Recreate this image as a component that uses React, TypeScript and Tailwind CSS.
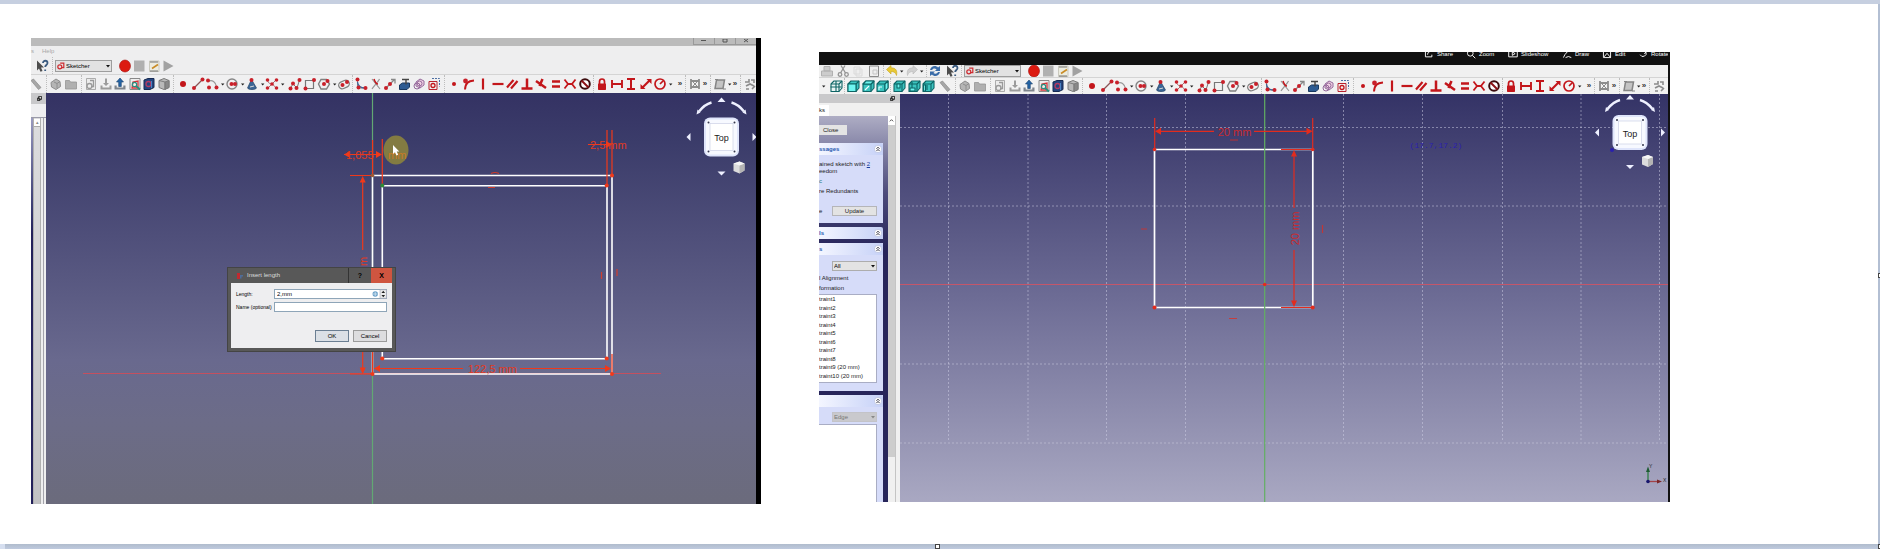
import type { ReactNode } from "react";

const RED = "#c3161b";
const DIM = "#f0391a";

const Dots = ({ at, r = 2 }: { at: number[][]; r?: number }) => (
  <>
    {at.map(([x, y]) => (
      <circle key={`${x}-${y}`} cx={x} cy={y} r={r} fill="#c8202a" />
    ))}
  </>
);

const viewCube = (face: string | null, mark?: ReactNode) => (
  <g stroke="#0d6465" strokeWidth="1.1" strokeLinejoin="round">
    <path d="M2 5l3-3h8v7l-3 3.500H2z" fill={face ? "#3cc4c0" : "#e8f4f4"} />
    <path d="M2 5h8l3-3M10 5v7.500" fill="none" />
    {face && <path d={face} fill="#6ff5f0" />}
    {mark}
  </g>
);

const glyphs: Record<string, ReactNode> = {
  Measure: <path d="M2 3.500l2.500-1.500 7.500 8.500-2.500 2z" fill="#a6a6a6" stroke="#8b8b8b" strokeWidth=".7" />,
  "Create part": (
    <g fill="#b5b5b5" stroke="#8e8e8e">
      <path d="M2 5.500l5-3.500 4 2.500.500 5L7 12.500 2.500 10z" />
      <path d="M5 5l3 1.500V11M8 6.500l3-2" fill="none" />
    </g>
  ),
  "Create group": <path d="M1.500 3.500h4l1 1.500h6v7h-11z" fill="#b0b0b0" stroke="#969696" strokeWidth=".8" />,
  "New sketch": (
    <g fill="none" stroke="#9a9a9a">
      <path d="M2.500 1.500h9v11h-9z" fill="#ececec" strokeWidth=".8" />
      <circle cx="5.500" cy="9" r="2.500" strokeWidth="1.300" />
      <path d="M6 3.500h3.500v6H7" strokeWidth="1.300" />
    </g>
  ),
  "Edit sketch": (
    <g fill="#9c9c9c">
      <path d="M6 1.500h2V6h2L7 9 4 6h2z" />
      <path d="M1.500 8.500h2v2h7v-2h2v4h-11z" />
    </g>
  ),
  "Leave sketch": (
    <g>
      <path d="M7 1l3.500 4H8.300v4.500H5.700V5H3.500z" fill="#2564a5" stroke="#17406d" strokeWidth=".6" />
      <path d="M1.500 8.500h2.200v2h6.600v-2h2.200v4h-11z" fill="#7f858d" />
    </g>
  ),
  "View sketch": (
    <g fill="none">
      <path d="M2 1.500h10v11H2z" fill="#eee" stroke="#888" />
      <path d="M4 11l1-6 5-1v7z" stroke="#d63338" strokeWidth="1.300" />
      <circle cx="6.500" cy="7.500" r="2.200" stroke="#27907f" strokeWidth="1.200" />
      <path d="M8 9l4 3.500" stroke="#27907f" strokeWidth="1.800" />
    </g>
  ),
  "View section": (
    <g strokeLinejoin="round">
      <path d="M2 3l4-1.500h6v9L8 12.500H2z" fill="#24457e" stroke="#172a52" />
      <circle cx="6.500" cy="7" r="2.500" fill="none" stroke="#b33a63" strokeWidth="1.300" />
      <path d="M9.500 4v7" stroke="#4c83c4" />
    </g>
  ),
  "Map sketch": (
    <g stroke="#7d7d7d" strokeLinejoin="round">
      <path d="M2 3.500l5-2 5 2v7l-5 2-5-2z" fill="#b9b9b9" />
      <path d="M8 5l4-1.500v7L8 12.500z" fill="#888" />
      <path d="M2 3.500L8 5v7.500" fill="none" />
    </g>
  ),
  Point: <circle cx="7" cy="7" r="3" fill={RED} />,
  Line: (
    <g>
      <path d="M3 11l8-8" stroke="#8b5557" strokeWidth="1.300" />
      <Dots at={[[3, 11], [11.500, 2.500]]} />
    </g>
  ),
  Arc: (
    <g>
      <path d="M3 4.500C7 2 11 5 11.500 10" stroke="#999" strokeWidth="1.300" fill="none" />
      <Dots at={[[3, 3.500], [4, 10.500], [11.500, 10.500]]} />
    </g>
  ),
  Circle: (
    <g>
      <circle cx="7" cy="7" r="5" stroke="#858585" strokeWidth="1.400" fill="none" />
      <Dots at={[[6.500, 7], [10, 7]]} />
    </g>
  ),
  Conic: (
    <g>
      <path d="M6.500 2.500L2.500 11c1 2 8 2 9 0z" fill="#3b6696" stroke="#234063" strokeWidth=".7" />
      <Dots at={[[6.500, 3]]} />
      <path d="M5 10l4-1" stroke="#d9d9d9" />
    </g>
  ),
  Spline: (
    <g>
      <path d="M2.500 3c1 5 4 3 5 4s3 4 4 4M3 11L11 3" stroke="#a76d70" fill="none" />
      <Dots at={[[2.500, 3], [11.500, 3], [2.500, 11], [11.500, 11], [7, 7]]} r={1.8} />
    </g>
  ),
  Polyline: (
    <g>
      <path d="M2 11.500L5 7l4 4 2.500-8" stroke="#777" fill="none" />
      <Dots at={[[2.500, 11.500], [5, 6.500], [8.500, 11], [11.500, 3]]} />
    </g>
  ),
  Rectangle: (
    <g>
      <path d="M2.500 3.500h8v8h-8z" stroke="#777" strokeWidth="1.200" fill="none" />
      <Dots at={[[2.500, 11.500], [11, 3]]} />
    </g>
  ),
  Polygon: (
    <g>
      <path d="M4 2.500h5.500l3 4.500-3 5H4L1.500 7z" stroke="#808080" strokeWidth="1.400" fill="none" />
      <Dots at={[[7, 7], [10.500, 4]]} />
    </g>
  ),
  Slot: (
    <g>
      <rect x="1.500" y="4" width="11" height="7" rx="3.500" transform="rotate(-25 7 7.500)" stroke="#808080" strokeWidth="1.300" fill="none" />
      <Dots at={[[5.500, 8], [10, 5]]} />
    </g>
  ),
  Fillet: (
    <g>
      <path d="M3.500 2v9h8" stroke="#888" fill="none" />
      <path d="M3.500 5C4 9 6 11 11 11" stroke="#3d659a" strokeWidth="1.300" fill="none" />
      <Dots at={[[3.500, 2.500], [4.500, 10.500], [11.500, 11]]} />
    </g>
  ),
  Trim: (
    <g fill="none">
      <path d="M3 2l8 10M10.500 2C9 5 5 9 3 12" stroke="#969696" strokeWidth="1.200" />
      <path d="M5 2c1 3 2 5 4 5" stroke={RED} strokeWidth="1.500" />
    </g>
  ),
  Extend: (
    <g>
      <path d="M3 11l8-8M8 2.500h4v4" stroke="#888" strokeWidth="1.300" fill="none" />
      <Dots at={[[3, 11], [7, 7]]} />
    </g>
  ),
  "External geometry": (
    <g>
      <path d="M1.500 8l3-2h7v4l-2.500 2.500H1.500z" fill="#2d5b92" stroke="#18385f" />
      <path d="M4 2.500h7M8 2.500v5" stroke="#444" strokeWidth="1.400" />
    </g>
  ),
  "Carbon copy": (
    <g fill="#f1d2e4" stroke="#94699b">
      <path d="M4 5l4-3 4 2v4l-4 3-4-2z" />
      <circle cx="5" cy="9" r="3" fill="none" />
      <circle cx="7.500" cy="6.500" r="2.500" fill="none" />
    </g>
  ),
  "Construction mode": (
    <g fill="none">
      <path d="M5 1.500h7.500v8" stroke="#4d6fa3" strokeDasharray="2 1" />
      <path d="M2 4.500h8v8H2z" stroke="#b8232f" />
      <circle cx="6" cy="8.500" r="2" stroke={RED} strokeWidth="1.300" />
    </g>
  ),
  Coincident: <circle cx="7" cy="7" r="2" fill={RED} />,
  "Point on object": (
    <g>
      <path d="M3 12.500C3.500 6 6 4 12 3.500" stroke={RED} strokeWidth="2" fill="none" />
      <Dots at={[[3.500, 4]]} r={2.4} />
    </g>
  ),
  Vertical: <path d="M7 1.500v11" stroke={RED} strokeWidth="2.200" />,
  Horizontal: <path d="M1.500 7h11" stroke={RED} strokeWidth="2.200" />,
  Parallel: <path d="M2 10.500L8.500 3M6 11.500L12.500 4" stroke={RED} strokeWidth="2.200" />,
  Perpendicular: <path d="M7 1.500v9M1.500 11.500h11" stroke={RED} strokeWidth="2.500" />,
  Tangent: <path d="M2 4l10 7M8.500 2L5.500 9" stroke={RED} strokeWidth="2.500" />,
  Equal: <path d="M3 4.500h8M3 9.500h8" stroke={RED} strokeWidth="2.400" />,
  Symmetric: <path d="M1.500 2.500L5 7l-3.500 4.500M12.500 2.500L9 7l3.500 4.500M5 7h4" stroke={RED} strokeWidth="1.800" fill="none" />,
  Block: (
    <g fill="none" stroke="#3c0c0e" strokeWidth="2">
      <circle cx="7" cy="7" r="4.800" fill="#fff" />
      <path d="M3.500 3.500l7 7" stroke="#8c1216" />
    </g>
  ),
  Lock: (
    <g>
      <path d="M4.500 7V4.500a2.500 2.500 0 015 0V7" stroke={RED} strokeWidth="1.700" fill="none" />
      <rect x="3" y="6.500" width="8" height="6.500" rx=".7" fill={RED} />
    </g>
  ),
  "Horizontal distance": <path d="M2 3v8M12 3v8M2 7h10" stroke={RED} strokeWidth="1.900" />,
  "Vertical distance": <path d="M3 2h8M3 12h8M7 2v10" stroke={RED} strokeWidth="2" />,
  Distance: (
    <g>
      <path d="M3.500 10.500l7-7" stroke={RED} strokeWidth="2.200" />
      <path d="M7.500 2h5v5zM6.500 12h-5V7z" fill={RED} />
    </g>
  ),
  Radius: (
    <g fill="none" stroke={RED} strokeWidth="1.700">
      <circle cx="7" cy="7" r="5" />
      <path d="M7 7l3-3" />
    </g>
  ),
  "Select constraints": (
    <g fill="none" stroke="#8d8d8d" strokeWidth="1.800">
      <path d="M3 2v10M11 2v10M3 4h8M3 10h8" />
      <path d="M4 4l6 6M10 4l-6 6" strokeWidth="1" />
    </g>
  ),
  "Show degrees of freedom": (
    <g fill="#c4c4c4" stroke="#858585" strokeWidth="1.500">
      <path d="M3.500 3h8l-1.500 8.500H2z" />
      <path d="M2 2.500h3M10 12h3" strokeWidth="1" />
    </g>
  ),
  "Virtual space": (
    <g fill="none" stroke="#8c8c8c" strokeWidth="1.600">
      <path d="M2 5h4V2M8 3h3v3M3 9l4-2 4 2M3 12h3M9 12l3-3" />
    </g>
  ),
  Isometric: viewCube(null, <path d="M1.500 8h11M7 2v11" fill="none" />),
  Front: viewCube("M2 5h8v7.500H2z"),
  TopView: viewCube("M2 5l3-3h8l-3 3z", <path d="M4 11l4-4" fill="none" stroke="#f4ffff" />),
  Right: viewCube("M10 5l3-3v7l-3 3.500z", <path d="M4 11V8h3" fill="none" stroke="#e5ffff" />),
  Rear: viewCube("M5 5h3v4H5z"),
  Bottom: viewCube("M3 9h5v3H3z", <path d="M5 3v6" fill="none" />),
  Left: viewCube("M2.500 6h2v6h-2z", <path d="M6 6v5" fill="none" />),
  "What is this": (
    <g>
      <path d="M2 1.500l7 7H6l1.500 3.500-2 .7L4 9.500l-2 2z" fill="#4d4d4d" />
      <path d="M8 4c0-3 4.500-3 4.500 0 0 2-2.300 2-2.300 4M10.200 10.500v1.500" stroke="#3c5c80" strokeWidth="1.800" fill="none" />
    </g>
  ),
  Record: <ellipse cx="7" cy="7" rx="5.500" ry="6" fill="#dc1a10" stroke="#a50c0a" strokeWidth=".6" />,
  Stop: <path d="M2 1.500h10.500v11H2z" fill="#b0b0b0" />,
  Macros: (
    <g fill="none">
      <path d="M2.500 2h9.500v10.500H2.500z" fill="#ececdf" stroke="#c0bfb4" strokeWidth=".8" />
      <path d="M3 3h8M3 12h8" stroke="#777" />
      <path d="M5 9.500l6-4" stroke="#c98c26" strokeWidth="1.600" />
    </g>
  ),
  Play: <path d="M2.500 1.500L12.500 7l-10 5.500z" fill="#a2a2a2" />,
  Print: <path d="M1.500 7h11v5h-11zM4 2.500h6V7H4z" fill="#ccc" stroke="#b1b1b1" />,
  Cut: (
    <g fill="none" stroke="#949494" strokeWidth="1.300">
      <path d="M5 1.500L9.500 9M9 1.500L4.500 9" />
      <circle cx="4" cy="10.500" r="1.800" />
      <circle cx="10.500" cy="10.500" r="1.800" />
    </g>
  ),
  Copy: <path d="M3 3h6v7H3zM5 5h6v7H5z" fill="#eee" stroke="#dadada" />,
  Paste: (
    <g fill="#eee" stroke="#8a8a8a">
      <path d="M2.500 2h9v10.500h-9z" />
      <path d="M6 6h4v4H6z" stroke="#c5c5c5" />
    </g>
  ),
  Undo: <path d="M1.500 5.500L6 1.500v2.300c5 0 6.500 3 5.500 7.700-1-3-2.500-4-5.500-4v2.500z" fill="#e9c935" stroke="#c8a41c" strokeWidth=".6" />,
  Redo: <path d="M12.500 5.500L8 1.500v2.300c-5 0-6.500 3-5.500 7.700 1-3 2.500-4 5.500-4v2.500z" fill="#d0d0d0" stroke="#bbb" strokeWidth=".6" />,
  Refresh: (
    <g fill="#3a6ca8">
      <path d="M2 6c1-4.500 6-5 8-2.500L12 2v5H7l1.600-1.700C7 4 5 4 4 6z" />
      <path d="M12 8c-1 4.500-6 5-8 2.500L2 12V7.500h5L5.400 9c1.600 1 3.600 1 4.600-1z" />
    </g>
  ),
};

function Tool({ name }: { name: string }) {
  return (
    <button type="button" aria-label={name} className="block size-[14px] shrink-0">
      <svg viewBox="0 0 14 14" className="size-full" aria-hidden="true">{glyphs[name]}</svg>
    </button>
  );
}

function Caret() {
  return (
    <svg viewBox="0 0 5 14" className="h-[14px] w-[5px] shrink-0" aria-hidden="true">
      <path d="M1 6.500h3.400L2.700 8.500z" fill="#222" />
    </svg>
  );
}

function More() {
  return (
    <button type="button" aria-label="More tools" className="w-[6px] shrink-0 text-center font-bold text-[8px] leading-[14px] text-[#333]">
      »
    </button>
  );
}

/* A dash in the list stands for the drop-down arrow of the tool before it. */
function Group({ items, className }: { items: string[]; className: string }) {
  return (
    <div className={`flex shrink-0 items-center justify-between ${className}`}>
      {items.map((n, i) => (n === "-" ? <Caret key={i} /> : <Tool key={i} name={n} />))}
    </div>
  );
}

const Sep = ({ className = "w-[6px]" }: { className?: string }) => (
  <div className={`flex shrink-0 justify-center self-stretch ${className}`}>
    <div className="border-l border-dotted border-[#bdbdbd]" />
  </div>
);

function SketchTools() {
  return (
    <>
      <Tool name="Measure" />
      <Sep />
      <Group className="w-[29px]" items={["Create part", "Create group"]} />
      <Sep />
      <Group className="w-[87px]" items={["New sketch", "Edit sketch", "Leave sketch", "View sketch", "View section", "Map sketch"]} />
      <Sep className="w-[5px]" />
      <Group className="w-[109px]" items={["Point", "Line", "Arc", "-", "Circle", "-", "Conic", "-", "Spline", "-"]} />
      <Group className="ml-[3px] w-[63px]" items={["Polyline", "Rectangle", "Polygon", "-", "Slot"]} />
      <Sep className="w-[3px]" />
      <Group className="w-[87px]" items={["Fillet", "Trim", "Extend", "External geometry", "Carbon copy", "Construction mode"]} />
      <Sep />
      <Group
        className="w-[145px]"
        items={["Coincident", "Point on object", "Vertical", "Horizontal", "Parallel", "Perpendicular", "Tangent", "Equal", "Symmetric", "Block"]}
      />
      <Sep className="w-[3px]" />
      <Group className="w-[78px]" items={["Lock", "Horizontal distance", "Vertical distance", "Distance", "Radius", "-"]} />
      <div className="w-[4px] shrink-0" />
      <More />
      <Sep className="w-[5px]" />
      <Tool name="Select constraints" />
      <More />
      <Sep className="w-[5px]" />
      <Tool name="Show degrees of freedom" />
      <Caret />
      <More />
      <Sep className="w-[5px]" />
      <Tool name="Virtual space" />
    </>
  );
}

function Workbench() {
  return (
    <>
      <div className="relative w-[57px] shrink-0">
        <svg viewBox="0 0 10 10" className="pointer-events-none absolute top-[2px] left-[2px] size-[8px]" aria-hidden="true">
          <g fill="none" stroke="#cf2b30" strokeWidth="1.500">
            <circle cx="3.500" cy="6" r="2.500" />
            <path d="M4 1.500h4.500V7H5" />
          </g>
        </svg>
        <select
          aria-label="Workbench"
          className="block h-[12px] w-full appearance-none border border-[#9d9d9d] bg-[#e2e2e2] pl-[10px] text-[6px] leading-[10px] text-black"
        >
          <option>Sketcher</option>
        </select>
        <svg viewBox="0 0 4 3" className="pointer-events-none absolute top-[5px] right-[2px] h-[3px] w-[4px]" aria-hidden="true">
          <path d="M0 0h4L2 2.500z" fill="#111" />
        </svg>
      </div>
      <Group className="ml-[6px] w-[57px]" items={["Record", "Stop", "Macros", "Play"]} />
    </>
  );
}

/* Navigation cube; the centre and half height of its face are given. */
function NavCube({ cx, cy, hh }: { cx: number; cy: number; hh: number }) {
  const t = cy - hh;
  const b = cy + hh;
  return (
    <g fill="#eef0ff">
      <path d={`M${cx} ${t - 20}l4 4.500h-8zM${cx} ${b + 19}l4-4h-8zM${cx - 35} ${cy}l4-4v8zM${cx + 35} ${cy}l-4-4v8z`} />
      <path
        d={`M${cx - 22.500} ${t - 6}Q${cx - 17} ${t - 13} ${cx - 10} ${t - 15}M${cx + 22.500} ${t - 6}Q${cx + 17} ${t - 13} ${cx + 10} ${t - 15}`}
        fill="none"
        stroke="#eef0ff"
        strokeWidth="2.500"
      />
      <path d={`M${cx - 25} ${t - 3}l1-5 3 3zM${cx + 25} ${t - 3}l-1-5-3 3z`} />
      <rect x={cx - 17.500} y={t} width="35" height={hh * 2} rx="6" fill="#dfe5fb" />
      <rect x={cx - 15.500} y={t + 2} width="31" height={hh * 2 - 4} rx="4" fill="#f7f9ff" />
      <rect x={cx - 11.500} y={t + 6} width="23" height={hh * 2 - 12} fill="#fff" stroke="#ccd1e6" strokeWidth=".7" />
      <g fill="#33364d">
        {[[-13, t + 5], [13, t + 5], [-13, b - 5], [13, b - 5]].map(([dx, y]) => (
          <circle key={`${dx}${y}`} cx={cx + dx} cy={y} r="1" />
        ))}
      </g>
      <text x={cx} y={cy + 4} textAnchor="middle" fontSize="9" fill="#1b1b1b">Top</text>
      <path d={`M${cx + 12} ${b + 7}l6-2 5 2v7l-5 3-6-2.500z`} fill="#dcdcdc" />
      <path d={`M${cx + 18} ${b + 9}l5-2v7l-5 3z`} fill="#b4b4b4" />
      <path d={`M${cx + 12} ${b + 7}l6-2 5 2-5 2z`} fill="#f6f6f6" />
    </g>
  );
}

const tip = (x: number, y: number, dir: "l" | "r" | "u" | "d") =>
  ({
    l: `M${x} ${y}l6-3.500v7z`,
    r: `M${x} ${y}l-6-3.500v7z`,
    u: `M${x} ${y}l-3 6.500h6z`,
    d: `M${x} ${y}l-3-6.500h6z`,
  })[dir];

function FrameSketch() {
  return (
    <svg viewBox="46 93 710 411" preserveAspectRatio="xMidYMin slice" className="absolute inset-0 size-full" role="img" aria-label="Frame sketch">
      <defs>
        <linearGradient id="viewA" x1="0" y1="0" x2="0" y2="1">
          <stop offset="0" stopColor="#343263" />
          <stop offset=".12" stopColor="#3b3c6a" />
          <stop offset=".35" stopColor="#4f4f7a" />
          <stop offset=".65" stopColor="#69698e" />
          <stop offset=".8" stopColor="#6c6c88" />
          <stop offset="1" stopColor="#6b6b7c" />
        </linearGradient>
      </defs>
      <rect x="46" y="93" width="710" height="411" fill="url(#viewA)" />
      <path d="M83 373.500h578" stroke="#c4505f" strokeWidth="1" />
      <path d="M372.500 93v411" stroke="#62a873" strokeWidth="1.200" />
      <g fill="none" stroke="#fff" strokeWidth="1.600">
        <path d="M372.500 175.500H612V374H372.500z" />
        <path d="M382.300 185.700H607v173H382.300z" />
      </g>
      <g stroke={DIM} strokeWidth="1.200" fill="none">
        <path d="M344 154.500h37M372.600 140v35M382.300 139v45M350 175.500h22M362.700 180v70M362.700 350v22M350 374h22" />
        <path d="M588 144.500h22M607 130v54M612 130v45M374 368.500h89M520 368.500h90M372.600 352v22M612 354v20" />
        <path d="M491 173.500q4-2 8 0M488 187.500h7M601.500 272v7M617 269v7" strokeOpacity=".8" />
      </g>
      <g fill={DIM}>
        <path d={`${tip(362.700, 176, "u")}${tip(362.700, 374, "d")}${tip(382, 154.500, "r")}${tip(344, 154.500, "l")}${tip(612, 144.500, "r")}${tip(374, 368.500, "l")}${tip(611, 368.500, "r")}`} />
        <circle cx="372.500" cy="374" r="2" />
        <circle cx="612" cy="374" r="2" />
        <circle cx="612" cy="175.500" r="2" />
        <circle cx="606.700" cy="185.500" r="2" />
        <circle cx="382.300" cy="358.500" r="2" />
        <circle cx="606.700" cy="358.500" r="2" />
      </g>
      <circle cx="372.500" cy="175.500" r="1.800" fill="#9a5a35" />
      <circle cx="382.300" cy="185.500" r="2" fill="#2f8a35" />
      <ellipse cx="396" cy="150" rx="12.500" ry="14.500" fill="#837b42" />
      <g fill="#e03a22" fontSize="11">
        <text x="346" y="158.500">1,055</text>
        <text x="388" y="158.500" fill="#c97a26">mm</text>
        <text x="590" y="149">2,5 mm</text>
        <text x="492.500" y="373" textAnchor="middle">122,5 mm</text>
        <text transform="translate(366.500 266) rotate(-90)">m</text>
      </g>
      <path d="M393 145v9l2-1.800 1.500 3.300 1.700-.8-1.500-3.200h2.600z" fill="#fff" />
      <NavCube cx={721.500} cy={137} hh={19.500} />
    </svg>
  );
}

function SquareSketch() {
  return (
    <svg viewBox="900 94 768 408" preserveAspectRatio="xMidYMin slice" className="absolute inset-0 size-full" role="img" aria-label="Square sketch">
      <defs>
        <linearGradient id="viewB" x1="0" y1="0" x2="0" y2="1">
          <stop offset="0" stopColor="#343366" />
          <stop offset=".5" stopColor="#6d6c95" />
          <stop offset="1" stopColor="#a9a8c2" />
        </linearGradient>
      </defs>
      <rect x="900" y="94" width="768" height="408" fill="url(#viewB)" />
      <path
        d="M948.500 94v348M1028 94v348M1106.500 94v348M1185.500 94v348M1343.500 94v348M1422.500 94v348M1502.500 94v348M1581 94v348M1659.500 94v348M900 127.500h768M900 206h768M900 364h768M900 443h768"
        stroke="#cfcfe6"
        strokeOpacity=".5"
        strokeDasharray="2 2"
      />
      <path d="M900 284.500h768" stroke="#c4566a" strokeWidth="1.200" />
      <path d="M1154.500 149.500h158.300v158h-158.300z" fill="none" stroke="#fff" strokeWidth="1.700" />
      <path d="M1264.700 94v408" stroke="#62b062" strokeWidth="1.200" />
      <g stroke="#e22c1e" strokeWidth="1.200" fill="none">
        <path d="M1154.700 118v32M1312.700 118v32M1158 131.300h56M1254 131.300h56M1281 149.500h32M1281 307.500h32M1294 154v54M1294 250v54" />
        <path d="M1230 140h8M1229 318.500h8M1322.500 225v8M1141 229h6" strokeOpacity=".75" />
      </g>
      <g fill="#e22c1e">
        <path d={`${tip(1155, 131.300, "l")}${tip(1312.500, 131.300, "r")}${tip(1294, 150, "u")}${tip(1294, 307, "d")}`} />
        <circle cx="1154.500" cy="149.500" r="1.800" />
        <circle cx="1312.700" cy="149.500" r="1.800" />
        <circle cx="1154.500" cy="307.500" r="2" />
        <circle cx="1312.700" cy="307.500" r="2" />
        <circle cx="1264.700" cy="284.500" r="1.800" />
      </g>
      <g fill="#c92a2e" fontSize="11">
        <text x="1234.500" y="136" textAnchor="middle">20 mm</text>
        <text transform="translate(1299 228.500) rotate(-90)" textAnchor="middle">20 mm</text>
      </g>
      <text x="1436" y="148" textAnchor="middle" fontSize="8" fill="#2a1fae" style={{ fontFamily: '"Liberation Mono", monospace' }}>
        (17.7,17.2)
      </text>
      <circle cx="1612" cy="150" r="2" fill="#2a1fae" />
      <NavCube cx={1630} cy={132.500} hh={17.500} />
      <g strokeWidth="1.300">
        <path d="M1648 481.500V470" stroke="#2f7d45" />
        <path d="M1648 466.500l2 5.500h-4z" fill="#1e5c33" />
        <path d="M1648 481.500h11" stroke="#a24248" />
        <path d="M1662 481.500l-5-2v4z" fill="#7a2528" />
        <circle cx="1648" cy="481.500" r="1.800" fill="#16166e" />
      </g>
      <g fontSize="5" fill="#222">
        <text x="1649" y="468">Y</text>
        <text x="1663" y="482">X</text>
      </g>
    </svg>
  );
}

function InsertLength() {
  const field = "h-[10px] w-[113px] shrink-0 border border-[#8ea5b8] bg-white px-[2px] text-[6px] leading-[8px] text-black outline-none";
  const action = "h-[12px] w-[34px] border text-center text-[6px] leading-[10px] text-black";
  return (
    <form
      role="dialog"
      aria-label="Insert length"
      onSubmit={(e) => e.preventDefault()}
      className="absolute top-[174px] left-[181px] w-[169px] border border-[#444] bg-[#585858] px-[3px] pb-[3px]"
    >
      <div className="flex h-[15px] items-center pl-[5px] text-[#dedede]">
        <svg viewBox="0 0 8 8" className="size-[8px]" aria-hidden="true">
          <path d="M1 1h3v6H1z" fill="#c02a30" />
          <path d="M4 3h3v1.500H5.500v2H4z" fill="#4f6d99" />
        </svg>
        <h2 className="ml-[3px] flex-1 text-[6px]">Insert length</h2>
        <button type="button" aria-label="Help" className="h-full w-[23px] border-l border-[#333] text-[7px] font-bold leading-[15px] text-black">?</button>
        <button type="button" aria-label="Close dialog" className="h-full w-[21px] bg-[#cf5540] text-[7px] font-bold leading-[15px] text-black">X</button>
      </div>
      <div className="bg-[#eeeef0] px-[5px] pt-[6px] pb-[6px]">
        <div className="flex items-center justify-between">
          <label htmlFor="len" className="text-[5px] leading-[10px]">Length:</label>
          <div className="relative shrink-0">
            <input id="len" defaultValue="2,mm" className={`block ${field}`} />
            <svg viewBox="0 0 14 9" className="pointer-events-none absolute top-0 right-0 h-[10px] w-[15px]" aria-hidden="true">
              <circle cx="3" cy="4.500" r="2.500" fill="#6aa0c8" />
              <path d="M1 4.500h4M3 2.500v4" stroke="#dbeaf5" strokeWidth=".7" />
              <path d="M7.500.500h6v8h-6z" fill="#ececec" stroke="#99a" strokeWidth=".5" />
              <path d="M10.500 1.500l1.700 2H8.800zM10.500 7.500l1.700-2H8.800z" fill="#222" />
            </svg>
          </div>
        </div>
        <div className="mt-[3px] flex items-center justify-between">
          <label htmlFor="nm" className="whitespace-nowrap text-[5px] leading-[10px]">Name (optional)</label>
          <input id="nm" className={field} />
        </div>
        <div className="mt-[18px] flex justify-end gap-[4px]">
          <button type="submit" className={`${action} border-[#6b7f93] bg-[#dbe0e6]`}>OK</button>
          <button type="button" className={`${action} border-[#9b9b9b] bg-[#dddddf]`}>Cancel</button>
        </div>
      </div>
    </form>
  );
}

function DockIcon() {
  return (
    <svg viewBox="0 0 6 6" className="size-[5px]" aria-hidden="true">
      <path d="M2 .500h3.500V4H2zM.500 2.500h3V5.500h-3z" fill="#ddd" stroke="#111" />
    </svg>
  );
}

function LeftWindow() {
  return (
    <section aria-label="Frame model" className="flex min-w-0 flex-[725_1_0] flex-col border-r-[5px] border-black bg-[#eeeeef]">
      <div className="flex h-[8px] justify-end overflow-hidden bg-[#bbb] text-[#555]">
        {[["Minimize", "M5 1.500h5"], ["Restore", "M6 0h4v3H6z"], ["Close", "M6 0l4 3M10 0L6 3"]].map(([n, d]) => (
          <button key={n} type="button" aria-label={n} className="h-[7px] w-[21px] border-b border-l border-[#999]">
            <svg viewBox="0 0 16 5" className="mx-auto block h-[5px] w-[16px]" aria-hidden="true">
              <path d={d} stroke="currentColor" fill="none" />
            </svg>
          </button>
        ))}
      </div>
      <nav className="flex h-[11px] gap-[8px] text-[6px] leading-[11px] text-[#a8a8a8]">
        <a href="#windows">s</a>
        <a href="#help">Help</a>
      </nav>
      <div className="flex h-[17px] items-center overflow-hidden pl-[4px]">
        <Tool name="What is this" />
        <Sep />
        <Workbench />
      </div>
      <div className="flex h-[19px] items-center overflow-hidden border-t border-[#d4d4d4] bg-[#f0f0f1]">
        <div className="-ml-[2px] flex h-full items-center">
          <SketchTools />
        </div>
      </div>
      <div className="flex min-h-0 flex-1">
        <aside className="flex w-[15px] flex-col">
          <div className="flex h-[11px] items-center justify-end bg-[#c9c9cb] pr-[4px]"><DockIcon /></div>
          <div className="h-[13px] bg-[#efeff1]" />
          <div className="flex flex-1 border-t border-[#9a9aa8]">
            <div className="w-[2px] bg-linear-to-b from-[#9b9bc0] to-[#23215a] to-30%" />
            <div className="flex w-[8px] flex-col border-x border-[#b0b0b0] bg-linear-to-b from-[#dcdcde] to-[#c2c2c4]">
              <div className="mt-px flex h-[8px] items-center justify-center border-b border-[#aaa] bg-white text-[5px] text-[#888]">▴</div>
            </div>
            <div className="ml-[2px] w-px bg-[#a4a4ac]" />
          </div>
        </aside>
        <div className="relative min-w-0 flex-1 overflow-hidden">
          <FrameSketch />
          <InsertLength />
        </div>
      </div>
    </section>
  );
}

function PanelHead({ title }: { title: string }) {
  return (
    <div className="flex h-[12px] items-center justify-between rounded-tr-[2px] bg-linear-to-r from-[#f4f6ff] to-[#c6d1f7] pr-[1px]">
      <h3 className="text-[6px] font-bold leading-[12px] text-[#2858b0]">{title}</h3>
      <button type="button" aria-label="Collapse section" className="size-[8px]">
        <svg viewBox="0 0 8 8" aria-hidden="true">
          <circle cx="4" cy="4" r="3.600" fill="#fff" stroke="#b0b8d8" strokeWidth=".6" />
          <path d="M2.500 3.800L4 2.200l1.500 1.600M2.500 6L4 4.400 5.500 6" fill="none" stroke="#223" strokeWidth=".9" />
        </svg>
      </button>
    </div>
  );
}

const constraints = ["1", "2", "3", "4", "5", "6", "7", "8", "9 (20 mm)", "10 (20 mm)"];

function PanelSelect({ label, value, off }: { label: string; value: string; off?: boolean }) {
  return (
    <div className="relative ml-auto w-[45px]">
      <select
        aria-label={label}
        disabled={off}
        className="block h-[10px] w-full appearance-none border border-[#adadad] bg-[#e3e3e3] pl-[1px] text-[6px] leading-[8px] text-black disabled:border-[#c3c3c8] disabled:bg-[#c9c9cd] disabled:text-[#777] disabled:opacity-100"
      >
        <option>{value}</option>
      </select>
      <svg viewBox="0 0 4 3" className="pointer-events-none absolute top-[4px] right-[2px] h-[3px] w-[4px]" aria-hidden="true">
        <path d="M0 0h4L2 2.500z" fill={off ? "#888" : "#111"} />
      </svg>
    </div>
  );
}

function TaskPanel() {
  return (
    <aside className="flex w-[81px] shrink-0 flex-col bg-[#f0f0f0] text-[6px] text-[#222]">
      <div className="flex h-[9px] shrink-0 items-center justify-end bg-[#c9c9cb] pr-[5px]"><DockIcon /></div>
      <div className="flex h-[13px] shrink-0 items-end">
        <button type="button" className="h-[11px] w-[10px] bg-white text-left leading-[11px]">ks</button>
      </div>
      <div className="flex min-h-0 flex-1">
        <div className="flex w-[69px] flex-col overflow-hidden bg-linear-to-b from-[#aeadc4] via-[#4d4b7b] via-20% to-[#27255a] to-35% pr-[5px]">
          <button type="button" className="mt-[9px] h-[10px] w-[28px] shrink-0 bg-[#e4e4e4] pl-[4px] text-left leading-[10px]">Close</button>
          <div className="mt-[8px] h-[80px] shrink-0 bg-[#d6dcf9]">
            <PanelHead title="ssages" />
            <p className="mt-[6px] whitespace-nowrap leading-[7px]">
              ained sketch with <a href="#dof" className="text-[#1b3fa0] underline">2</a>
              <br />
              eedom
            </p>
            <p className="mt-[2px] leading-[8px] text-[#2b7a80]">c</p>
            <p className="mt-[2px] whitespace-nowrap leading-[8px]">re Redundants</p>
            <div className="mt-[11px] flex items-center justify-between pr-[6px]">
              <span className="leading-[10px]">e</span>
              <button type="button" className="h-[10px] w-[45px] border border-[#b5b5b8] bg-[#e3e3e3] leading-[8px]">Update</button>
            </div>
          </div>
          <div className="mt-[4px] shrink-0"><PanelHead title="ls" /></div>
          <div className="mt-[4px] h-[148px] shrink-0 bg-[#d6dcf9] pr-[6px]">
            <div className="-mr-[6px]"><PanelHead title="s" /></div>
            <div className="mt-[6px]"><PanelSelect label="Filter" value="All" /></div>
            <p className="mt-[3px] whitespace-nowrap leading-[8px]">l Alignment</p>
            <p className="mt-[2px] whitespace-nowrap leading-[8px]">formation</p>
            <ul className="mt-[2px] flex h-[89px] flex-col border-y border-r border-[#a9adc4] bg-white pb-[2px]">
              {constraints.map((c) => (
                <li key={c} className="flex flex-1 items-center whitespace-nowrap leading-[8px]">traint{c}</li>
              ))}
            </ul>
          </div>
          <div className="mt-[4px] flex flex-1 flex-col bg-[#d6dcf9] pr-[6px]">
            <div className="-mr-[6px]"><PanelHead title="" /></div>
            <div className="mt-[5px]"><PanelSelect label="Element type" value="Edge" off /></div>
            <div className="mt-[2px] flex-1 border-t border-r border-[#a9adc4] bg-white" />
          </div>
        </div>
        <div className="flex w-[8px] flex-col border-r border-[#c4c4c4]">
          <div className="flex h-[9px] items-center justify-center bg-white text-[#333]">
            <svg viewBox="0 0 6 6" className="size-[5px]" aria-hidden="true"><path d="M1 4l2-2 2 2" stroke="#333" fill="none" /></svg>
          </div>
          <div className="flex-[332_1_0] bg-[#cdcdcd]" />
          <div className="flex-[45_1_0]" />
        </div>
      </div>
    </aside>
  );
}

const photoActions = [
  ["Share", "M2 3v8h9V8M5 8c0-4 3-5 7-5", "w-[42px]"],
  ["Zoom", "M6 2a4 4 0 100 8 4 4 0 000-8M9 9l4 4", "w-[42px]"],
  ["Slideshow", "M1 2h12v9H1zM6 4v5l4-2.500z", "w-[54px]"],
  ["Draw", "M10 1L4 8l-2 4M5 12q4-3 8 0", "w-[40px]"],
  ["Edit", "M2 3h10v9H2zM3 11l4-5 5 6", "w-[36px]"],
  ["Rotate", "M3 8a4 4 0 108-4M9 2l2 2-2 3", "w-[30px]"],
];

function RightWindow() {
  return (
    <section aria-label="Square model" className="mt-[14px] mb-[2px] flex min-w-0 flex-[849_1_0] flex-col border-r-2 border-[#111] bg-[#f0f0f0]">
      <div className="h-[13px] overflow-hidden bg-[#111]">
        <div className="-mt-px flex justify-end">
          {photoActions.map(([name, d, w]) => (
            <button key={name} type="button" className={`flex h-[6px] shrink-0 items-center gap-[3px] text-[6px] leading-[6px] text-white ${w}`}>
              <svg viewBox="0 0 14 14" className="size-[10px] shrink-0" aria-hidden="true">
                <path d={d} fill="none" stroke="#fff" strokeWidth="1.300" />
              </svg>
              {name}
            </button>
          ))}
        </div>
      </div>
      <div className="flex h-[12px] items-center overflow-hidden">
        <Group className="ml-[1px] w-[61px]" items={["Print", "Cut", "Copy", "Paste"]} />
        <Sep className="w-[4px]" />
        <Group className="w-[39px]" items={["Undo", "-", "Redo", "-"]} />
        <Sep className="w-[4px]" />
        <Group className="w-[31px]" items={["Refresh", "What is this"]} />
        <Sep className="w-[5px]" />
        <Workbench />
      </div>
      <div className="flex h-[17px] items-center overflow-hidden border-t border-[#d4d4d4] bg-[#f2f2f2]">
        <div className="ml-[2px] flex h-full items-center">
          <Caret />
          <div className="w-[3px]" />
          <Tool name="Isometric" />
          <Sep className="w-[3px]" />
          <Group className="w-[43px]" items={["Front", "TopView", "Right"]} />
          <Sep className="w-[3px]" />
          <Group className="w-[43px]" items={["Rear", "Bottom", "Left"]} />
          <div className="w-[3px]" />
          <SketchTools />
        </div>
      </div>
      <div className="flex min-h-0 flex-1">
        <TaskPanel />
        <div className="relative min-w-0 flex-1 overflow-hidden">
          <SquareSketch />
        </div>
      </div>
    </section>
  );
}

const Handle = ({ className }: { className: string }) => (
  <span className={`absolute size-[5px] border border-[#444] bg-white ${className}`} />
);

export default function App() {
  return (
    <div className='relative flex min-h-screen flex-col overflow-hidden bg-white font-["Liberation_Sans",Arial,sans-serif]'>
      <div className="h-[4px] bg-[#c6cfe0]" />
      <main className="flex flex-1 border-r-2 border-[#b3bfd3] pt-[34px] pb-[40px] pl-[31px]">
        <LeftWindow />
        <div className="w-[58px] shrink-0" />
        <RightWindow />
        <div className="flex-[208_1_0]" />
      </main>
      <div className="h-[5px] border-l-[5px] border-[#d6dff0] bg-linear-to-b from-[#b0bccd] to-[#bfcade]" />
      <Handle className="bottom-0 left-1/2 -ml-[5px]" />
      <Handle className="top-1/2 -right-[3px] -mt-[2px]" />
      <Handle className="-right-[3px] bottom-0" />
    </div>
  );
}
